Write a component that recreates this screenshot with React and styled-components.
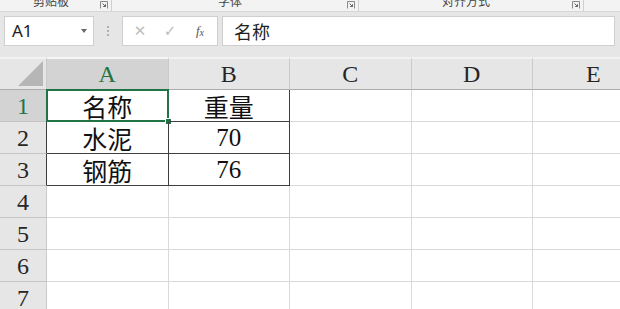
import React from 'react'
import styled, { createGlobalStyle } from 'styled-components'

const GlobalStyle = createGlobalStyle`
  html, body {
    margin: 0;
    padding: 0;
    background: #ffffff;
    overflow: hidden;
  }
`

const Page = styled.div`
  width: 620px;
  height: 309px;
  overflow: hidden;
  font-family: "Noto Sans", "Noto Sans CJK SC", sans-serif;
`

const RibbonStrip = styled.div`
  display: flex;
  height: 11px;
  background: #f3f3f3;
  border-bottom: 1px solid #d6d6d6;
  overflow: hidden;
`

const RibbonGroup = styled.div`
  display: flex;
  align-items: flex-start;
  width: ${p => p.$width}px;
  flex: none;
  border-right: 1px solid #d0d0d0;
  box-sizing: border-box;
`

const GroupLabel = styled.span`
  flex: 1;
  margin-top: -6px;
  padding-left: ${p => p.$indent}px;
  font-size: 12px;
  line-height: 14px;
  color: #444;
  font-family: "Noto Sans CJK SC", sans-serif;
`

const Launcher = styled.svg`
  flex: none;
  width: 8px;
  height: 8px;
  margin: 1px 3px 0 0;
`

const FormulaArea = styled.div`
  display: flex;
  align-items: center;
  gap: 4px;
  height: 45px;
  padding: 0 5px 8px 4px;
  box-sizing: border-box;
  background: #e6e6e6;
`

const NameBox = styled.div`
  display: flex;
  align-items: center;
  justify-content: space-between;
  width: 90px;
  height: 30px;
  padding: 0 6px 0 7px;
  box-sizing: border-box;
  background: #fff;
  border: 1px solid #cfcfcf;
  font-size: 17px;
  color: #222;
`

const Caret = styled.span`
  width: 0;
  height: 0;
  border-left: 3.5px solid transparent;
  border-right: 3.5px solid transparent;
  border-top: 4px solid #6a6a6a;
`

const Grip = styled.div`
  display: flex;
  flex-direction: column;
  align-items: center;
  gap: 2px;
  width: 20px;
`

const Dot = styled.span`
  width: 2px;
  height: 2px;
  background: #b0b0b0;
`

const IconBox = styled.div`
  display: flex;
  align-items: center;
  justify-content: space-around;
  width: 96px;
  height: 30px;
  box-sizing: border-box;
  background: #fff;
  border: 1px solid #cfcfcf;
  padding: 0 2px;
`

const ToolIcon = styled.span`
  width: 22px;
  text-align: center;
  font-size: 15px;
  color: #bdbdbd;
  font-family: "DejaVu Sans", sans-serif;
`

const Fx = styled.span`
  width: 22px;
  text-align: center;
  font-family: "Liberation Serif", serif;
  font-style: italic;
  font-size: 13px;
  color: #555;
  sub {
    font-size: 10px;
    vertical-align: -1px;
  }
`

const FormulaInput = styled.div`
  flex: 1;
  display: flex;
  align-items: center;
  height: 30px;
  padding-left: 11px;
  box-sizing: border-box;
  background: #fff;
  border: 1px solid #cfcfcf;
  font-family: "Noto Sans CJK SC", sans-serif;
  font-size: 18px;
  color: #222;
`

const Sheet = styled.div`
  display: grid;
  grid-template-columns: 47px repeat(5, 121.5px);
  grid-template-rows: 33px;
  grid-auto-rows: 32px;
  font-family: "Liberation Serif", "Noto Sans CJK SC", serif;
`

const Corner = styled.div`
  position: relative;
  background: #e6e6e6;
  border-right: 1px solid #cacaca;
  border-bottom: 1px solid #ababab;
  box-sizing: border-box;
  border-top: 2px solid #f2f2f2;
  &::after {
    content: "";
    position: absolute;
    right: 3px;
    bottom: 3px;
    width: 0;
    height: 0;
    border-left: 25px solid transparent;
    border-bottom: 25px solid #b6b6b6;
  }
`

const ColHead = styled.div`
  display: flex;
  align-items: center;
  justify-content: center;
  box-sizing: border-box;
  background: ${p => (p.$active ? '#d3d3d3' : '#e6e6e6')};
  border-top: 2px solid ${p => (p.$active ? '#f6f6f6' : '#f2f2f2')};
  border-right: 1px solid #cacaca;
  border-bottom: 1px solid #ababab;
  font-size: 24px;
  color: ${p => (p.$active ? '#217346' : '#262626')};
`

const RowHead = styled.div`
  display: flex;
  align-items: center;
  justify-content: center;
  box-sizing: border-box;
  background: ${p => (p.$active ? '#d3d3d3' : '#e6e6e6')};
  border-right: 1px solid ${p => (p.$edge ? '#3e3e3e' : '#cacaca')};
  border-bottom: 1px solid #c4c4c4;
  font-size: 24px;
  padding-top: 2px;
  color: ${p => (p.$active ? '#217346' : '#262626')};
`

const Cell = styled.div`
  position: relative;
  display: flex;
  align-items: center;
  justify-content: center;
  box-sizing: border-box;
  border-right: 1px solid ${p => (p.$boxed ? '#3e3e3e' : '#d9d9d9')};
  border-bottom: 1px solid ${p => (p.$boxed ? '#3e3e3e' : '#d9d9d9')};
  font-size: 25px;
  color: #111;
  padding-top: 1px;
  ${p =>
    p.$selected &&
    `
    &::before {
      content: "";
      position: absolute;
      left: -1px;
      top: -1px;
      right: -1px;
      bottom: -1px;
      border: 2px solid #217346;
    }
    &::after {
      content: "";
      position: absolute;
      right: -4px;
      bottom: -4px;
      width: 5px;
      height: 5px;
      background: #217346;
      border: 1px solid #fff;
    }
  `}
`

const columns = ['A', 'B', 'C', 'D', 'E']
const data = [
  ['名称', '重量'],
  ['水泥', '70'],
  ['钢筋', '76'],
]

function LauncherIcon() {
  return (
    <Launcher viewBox="0 0 8 8">
      <path d="M0.5 7.5V0.5H7.5V7.5" fill="none" stroke="#8a8a8a" strokeWidth="1" />
      <path d="M2.5 2.5L5.5 5.5M5.5 3.2V5.5H3.2" fill="none" stroke="#666" strokeWidth="1" />
    </Launcher>
  )
}

export default function App() {
  const rows = [1, 2, 3, 4, 5, 6, 7]
  return (
    <Page>
      <GlobalStyle />
      <RibbonStrip>
        <RibbonGroup $width={112}>
          <GroupLabel $indent={33}>剪贴板</GroupLabel>
          <LauncherIcon />
        </RibbonGroup>
        <RibbonGroup $width={247}>
          <GroupLabel $indent={106}>字体</GroupLabel>
          <LauncherIcon />
        </RibbonGroup>
        <RibbonGroup $width={225}>
          <GroupLabel $indent={83}>对齐方式</GroupLabel>
          <LauncherIcon />
        </RibbonGroup>
      </RibbonStrip>
      <FormulaArea>
        <NameBox>
          A1
          <Caret />
        </NameBox>
        <Grip>
          <Dot />
          <Dot />
          <Dot />
        </Grip>
        <IconBox>
          <ToolIcon>✕</ToolIcon>
          <ToolIcon>✓</ToolIcon>
          <Fx>
            f<sub>x</sub>
          </Fx>
        </IconBox>
        <FormulaInput>名称</FormulaInput>
      </FormulaArea>
      <Sheet>
        <Corner />
        {columns.map((c, i) => (
          <ColHead key={c} $active={i === 0}>
            {c}
          </ColHead>
        ))}
        {rows.map(r => (
          <React.Fragment key={r}>
            <RowHead $active={r === 1} $edge={r <= 3}>
              {r}
            </RowHead>
            {columns.map((c, ci) => {
              const value = data[r - 1] ? data[r - 1][ci] : undefined
              const boxed = r <= 3 && ci < 2
              return (
                <Cell key={c} $boxed={boxed} $selected={r === 1 && ci === 0}>
                  {value}
                </Cell>
              )
            })}
          </React.Fragment>
        ))}
      </Sheet>
    </Page>
  )
}
